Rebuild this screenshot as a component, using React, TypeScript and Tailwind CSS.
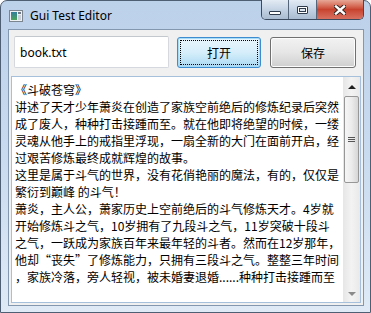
const cjk = "font-['Microsoft_YaHei','Noto_Sans_CJK_SC',sans-serif]";

const bookLines = [
  "《斗破苍穹》",
  "讲述了天才少年萧炎在创造了家族空前绝后的修炼纪录后突然",
  "成了废人，种种打击接踵而至。就在他即将绝望的时候，一缕",
  "灵魂从他手上的戒指里浮现，一扇全新的大门在面前开启，经",
  "过艰苦修炼最终成就辉煌的故事。",
  "这里是属于斗气的世界，没有花俏艳丽的魔法，有的，仅仅是",
  "繁衍到巅峰 的斗气！",
  "萧炎，主人公，萧家历史上空前绝后的斗气修炼天才。4岁就",
  "开始修炼斗之气，10岁拥有了九段斗之气，11岁突破十段斗",
  "之气，一跃成为家族百年来最年轻的斗者。然而在12岁那年，",
  "他却“丧失”了修炼能力，只拥有三段斗之气。整整三年时间",
  "，家族冷落，旁人轻视，被未婚妻退婚......种种打击接踵而至",
];

const AppIcon = () => (
  <svg width="14" height="12" viewBox="0 0 14 12">
    <defs>
      <linearGradient id="ico" x1="0" y1="0" x2="0" y2="1">
        <stop offset="0" stopColor="#2f7f9c" />
        <stop offset="1" stopColor="#4da35a" />
      </linearGradient>
    </defs>
    <rect x="0.5" y="0.5" width="13" height="11" fill="#eef1f3" stroke="#7b8590" />
    <rect x="2" y="2" width="6" height="8" fill="url(#ico)" />
    <rect x="9" y="2" width="3" height="2" fill="#6f7a86" />
    <rect x="9" y="5" width="3" height="5" fill="#c9d0d7" />
  </svg>
);

const CaptionButtons = () => (
  <div className="-mt-px ml-auto flex h-[20px] overflow-hidden rounded-b-[5px] border border-t-0 border-[#3b4a5d]">
    <div className="flex w-[27px] items-start justify-center border-r border-[#56667a] bg-gradient-to-b from-[#e3ebf4] via-[#c4d3e4] to-[#a9bbd0] pt-[11px]">
      <div className="h-[4px] w-[12px] rounded-[1px] border border-[#2e3b4b] bg-white" />
    </div>
    <div className="flex w-[28px] items-start justify-center border-r border-[#56667a] bg-gradient-to-b from-[#e3ebf4] via-[#c4d3e4] to-[#a9bbd0] pt-[6px]">
      <div className="flex h-[8px] w-[11px] items-center justify-center rounded-[1px] border border-[#2e3b4b] bg-white">
        <div className="h-[4px] w-[7px] border border-[#2e3b4b] bg-[#dfe7f0]" />
      </div>
    </div>
    <div className="flex w-[46px] items-start justify-center bg-gradient-to-b from-[#e7a797] via-[#c8432f] to-[#d87060] pt-[5px]">
      <svg width="12" height="10" viewBox="0 0 12 10">
        <path d="M2 1.5 L10 8.5 M10 1.5 L2 8.5" stroke="#3a2622" strokeWidth="4.4" strokeLinecap="square" />
        <path d="M2 1.5 L10 8.5 M10 1.5 L2 8.5" stroke="#ffffff" strokeWidth="2.4" strokeLinecap="square" />
      </svg>
    </div>
  </div>
);

const ScrollBar = () => (
  <div className="flex w-[17px] flex-col bg-gradient-to-r from-[#e6e6e6] via-[#f3f3f3] to-[#e9e9e9]">
    <div className="flex h-[19px] items-center justify-center">
      <div className="h-0 w-0 border-x-[4px] border-b-[4px] border-x-transparent border-b-[#202020]" />
    </div>
    <div className="mx-[1px] flex h-[87px] items-center justify-center rounded-[2px] border border-[#979797] bg-gradient-to-r from-[#f6f6f6] via-[#ececec] to-[#d6d6d6]">
      <div className="flex flex-col gap-[1px]">
        <div className="h-[1px] w-[7px] bg-[#555555]" />
        <div className="h-[1px] w-[7px] bg-[#555555]" />
        <div className="h-[1px] w-[7px] bg-[#555555]" />
      </div>
    </div>
    <div className="flex-1" />
    <div className="flex h-[17px] items-center justify-center">
      <div className="h-0 w-0 border-x-[4px] border-t-[4px] border-x-transparent border-t-[#8a8a8a]" />
    </div>
  </div>
);

export default function App() {
  return (
    <div className="h-[313px] w-[371px] overflow-hidden bg-white">
      <div className="flex h-full flex-col rounded-t-[7px] border border-[#4e5f73] bg-gradient-to-b from-[#bcd1ea] via-[#c9dbef] to-[#dfeaf6] pb-[6px] pl-[7px] pr-[6px]">
        <div className="flex h-[28px] items-start">
          <div className="mt-[8px] ml-[1px] flex items-center">
            <AppIcon />
            <span className="ml-[7px] font-['Noto_Sans',sans-serif] text-[12px] leading-[14px] text-black">
              Gui Test Editor
            </span>
          </div>
          <CaptionButtons />
        </div>

        <div className="flex flex-1 flex-col border border-[#8397af] bg-[#f0f0f0]">
          <div className="flex items-start pl-[5px] pt-[6px]">
            <div className="h-[32px] w-[155px] rounded-[2px] border border-[#d5d9df] border-t-[#c3c8cf] bg-white px-[5px] pt-[2px]">
              <span className="font-['Noto_Sans',sans-serif] text-[12px] leading-[16px] text-black">book.txt</span>
            </div>
            <button
              className={`ml-[8px] mt-[1px] flex h-[31px] w-[84px] items-center justify-center rounded-[3px] border border-[#3c8ccf] bg-gradient-to-b from-[#eaf6fd] via-[#d6eefb] via-50% to-[#a9d9f2] p-[2px] shadow-[inset_0_0_0_1px_#a6dcf7] ${cjk}`}
            >
              <span className="flex h-full w-full items-center justify-center border border-dotted border-black text-[12px] text-black">
                打开
              </span>
            </button>
            <button
              className={`ml-[9px] mt-[1px] flex h-[31px] w-[86px] items-center justify-center rounded-[3px] border border-[#707070] bg-gradient-to-b from-[#f2f2f2] via-[#e6e6e6] via-50% to-[#cfcfcf] text-[12px] text-black shadow-[inset_0_0_0_1px_#fcfcfc] ${cjk}`}
            >
              保存
            </button>
          </div>

          <div className="mx-[2px] mb-[2px] mt-[8px] flex flex-1 border border-[#a6bfdb] bg-white">
            <div className={`flex-1 pl-[3px] pt-[4px] text-[12px] text-black ${cjk}`}>
              {bookLines.map((line, index) => (
                <div key={index} className="h-[17px] whitespace-pre leading-[17px]">
                  {line}
                </div>
              ))}
            </div>
            <ScrollBar />
          </div>
        </div>
      </div>
    </div>
  );
}
